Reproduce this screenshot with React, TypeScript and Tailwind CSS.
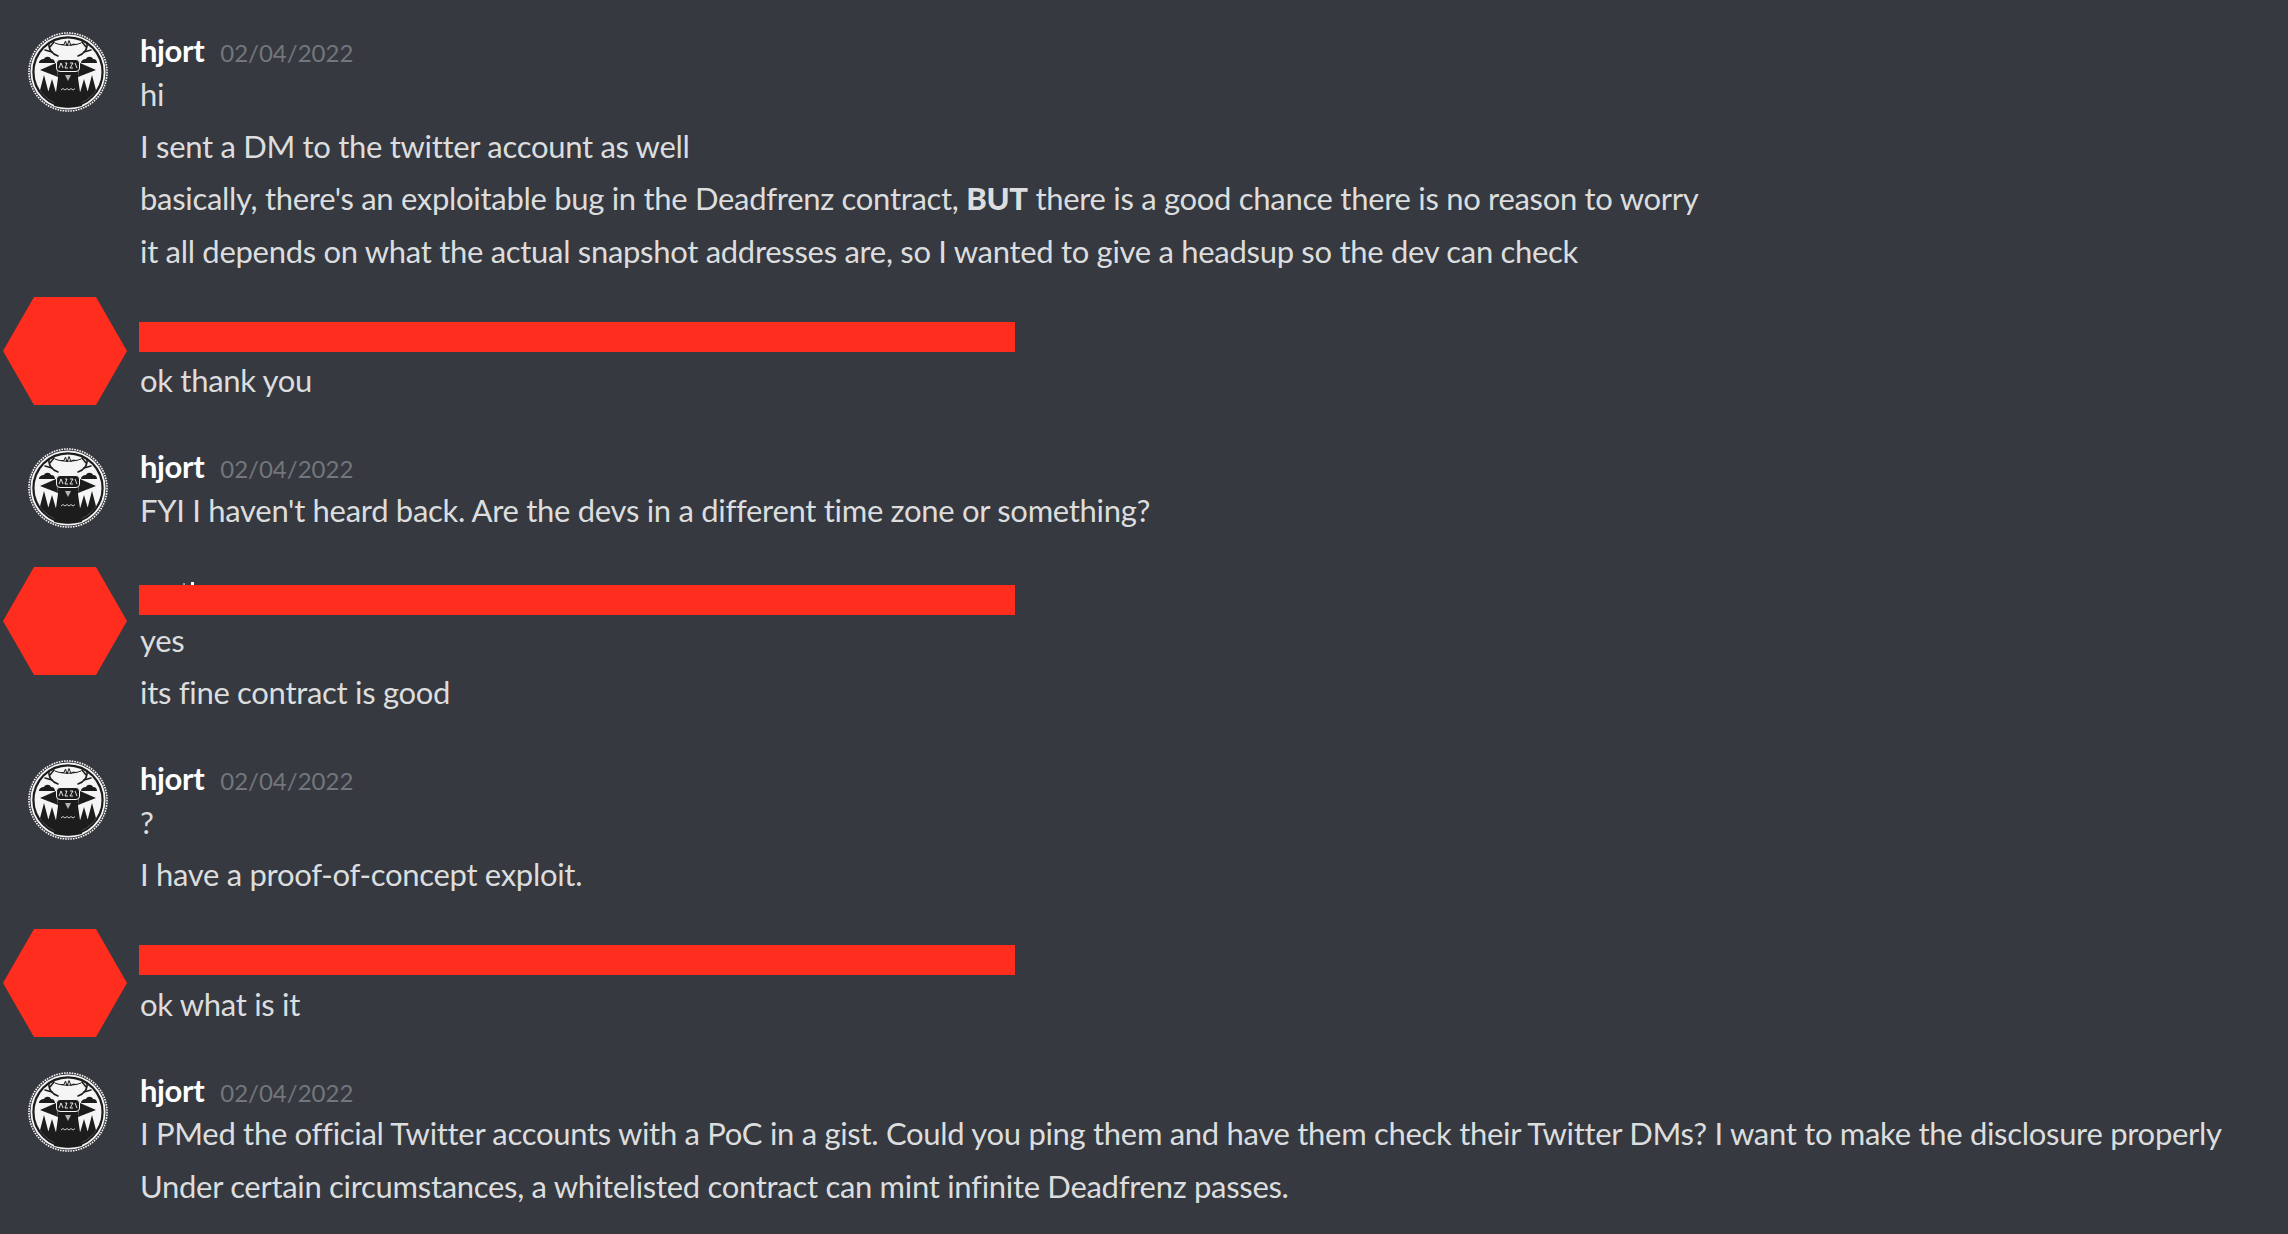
const INK = '#1c1c1c';
const PAPER = '#f5f5f5';

const Avatar = () => (
  <svg viewBox="0 0 80 80" className="w-[80px] h-[80px]">
    <defs>
      <clipPath id="disc">
        <circle cx="40" cy="40" r="33.5" />
      </clipPath>
    </defs>
    <circle cx="40" cy="40" r="39" fill="none" stroke={PAPER} strokeWidth="1.6" strokeDasharray="1.6 1" />
    <circle cx="40" cy="40" r="36.6" fill={INK} stroke={PAPER} strokeWidth="1.8" />
    <circle cx="40" cy="40" r="33.5" fill={PAPER} />
    <g clipPath="url(#disc)">
      {/* ground */}
      <rect x="0" y="60" width="80" height="20" fill={INK} />
      {/* trees */}
      <path d="M11 62L16 43L21 62ZM19 64L24 47L29 64Z" fill={INK} />
      <path d="M69 62L64 43L59 62ZM61 64L56 47L51 64Z" fill={INK} />
    </g>
    {/* antlers */}
    <g fill="none" stroke={INK} strokeWidth="1.5" strokeLinecap="round">
      <path d="M30 24C24 22 20 17 21 11" />
      <path d="M24 20L17 18M22 15L26 10" />
      <path d="M50 24C56 22 60 17 59 11" />
      <path d="M56 20L63 18M58 15L54 10" />
      <path d="M27 11C33 14 47 14 53 11" strokeWidth="1" />
      <path d="M33 12.5L36 12.5L37.5 9L39 14L41 8.5L43 13.5L45 12L48 12.5" strokeWidth="1" />
    </g>
    {/* clouds */}
    <path d="M11 31C11 28 14 27 16 27C17 24 22 24 23 27C26 27 27 29 27 31Z" fill={INK} />
    <path d="M53 31C53 28 56 27 58 27C59 24 64 24 65 27C68 27 69 29 69 31Z" fill={INK} />
    {/* ears */}
    <path d="M12 38L28 31L30 45Z" fill={INK} />
    <path d="M68 38L52 31L50 45Z" fill={INK} />
    {/* body */}
    <path d="M29 36L51 36L50 46L54 74Q40 77 26 74L30 46Z" fill={INK} />
    {/* goggles */}
    <rect x="28.5" y="27.5" width="23" height="12" rx="3.5" fill={INK} stroke={PAPER} strokeWidth="1" />
    <path d="M31 36L33 31L35 36M37 31L39 31L37 36L40 36M42 31L45 31L42 36L45 36M47 31L49 36" fill="none" stroke={PAPER} strokeWidth="0.9" />
    <path d="M37 43L40 49L43 43Z" fill={PAPER} opacity="0.7" />
    <path d="M33 58L35 56.5L37 58L39 56.5L41 58L43 56.5L45 58L47 56.5" fill="none" stroke={PAPER} strokeWidth="0.8" />
  </svg>
);

const Hexagon = () => (
  <svg viewBox="0 0 124 108" className="w-[124px] h-[108px]">
    <polygon points="31,0 93,0 124,54 93,108 31,108 0,54" fill="#ff2d1e" />
  </svg>
);

const Line = ({ children }: { children: React.ReactNode }) => (
  <p className="text-[31px] leading-[52.4px] tracking-[-0.3px] text-[#dcddde] whitespace-nowrap">{children}</p>
);

const HjortMessage = ({ lines }: { lines: React.ReactNode[] }) => (
  <div className="flex">
    <div className="w-[140px] pl-[28px] shrink-0">
      <Avatar />
    </div>
    <div>
      <div className="flex items-baseline gap-[16px] h-[35.5px] leading-[36px]">
        <span className="text-[31px] font-bold tracking-[-0.4px] text-white">hjort</span>
        <span className="text-[24px] text-[#72767d]">02/04/2022</span>
      </div>
      {lines.map((line, i) => (
        <Line key={i}>{line}</Line>
      ))}
    </div>
  </div>
);

// name and avatar are blacked out, the hexagon and bar sit on top of the message
const RedactedMessage = ({
  lines,
  hexClass,
  barClass,
  peek,
}: {
  lines: string[];
  hexClass: string;
  barClass: string;
  peek?: boolean;
}) => (
  <div className="relative pl-[140px]">
    <div className={`absolute left-[3px] ${hexClass}`}>
      <Hexagon />
    </div>
    <div className="h-[35.5px]" />
    {peek && (
      <>
        <div className="absolute left-[183px] top-[5px] w-[2px] h-[2px] bg-[#9a9a9a]" />
        <div className="absolute left-[191px] top-[4px] w-[3px] h-[3px] bg-white" />
      </>
    )}
    <div className={`absolute left-[139px] w-[876px] h-[30px] bg-[#ff2d1e] ${barClass}`} />
    {lines.map((line, i) => (
      <Line key={i}>{line}</Line>
    ))}
  </div>
);

export default function App() {
  return (
    <div className="h-[1234px] bg-[#36393f] overflow-hidden font-['Lato',sans-serif] pt-[32px] flex flex-col gap-[41.7px]">
      <HjortMessage
        lines={[
          'hi',
          'I sent a DM to the twitter account as well',
          <>
            basically, there's an exploitable bug in the Deadfrenz contract, <b className="font-black">BUT</b> there is a good chance there is no reason to worry
          </>,
          'it all depends on what the actual snapshot addresses are, so I wanted to give a headsup so the dev can check',
        ]}
      />
      <RedactedMessage hexClass="top-[-22px]" barClass="top-[3px]" lines={['ok thank you']} />
      <HjortMessage lines={["FYI I haven't heard back. Are the devs in a different time zone or something?"]} />
      <RedactedMessage hexClass="top-[-11px]" barClass="top-[7px]" peek lines={['yes', 'its fine contract is good']} />
      <HjortMessage lines={['?', 'I have a proof-of-concept exploit.']} />
      <RedactedMessage hexClass="top-[-13px]" barClass="top-[3px]" lines={['ok what is it']} />
      <HjortMessage
        lines={[
          'I PMed the official Twitter accounts with a PoC in a gist. Could you ping them and have them check their Twitter DMs? I want to make the disclosure properly',
          'Under certain circumstances, a whitelisted contract can mint infinite Deadfrenz passes.',
        ]}
      />
    </div>
  );
}
